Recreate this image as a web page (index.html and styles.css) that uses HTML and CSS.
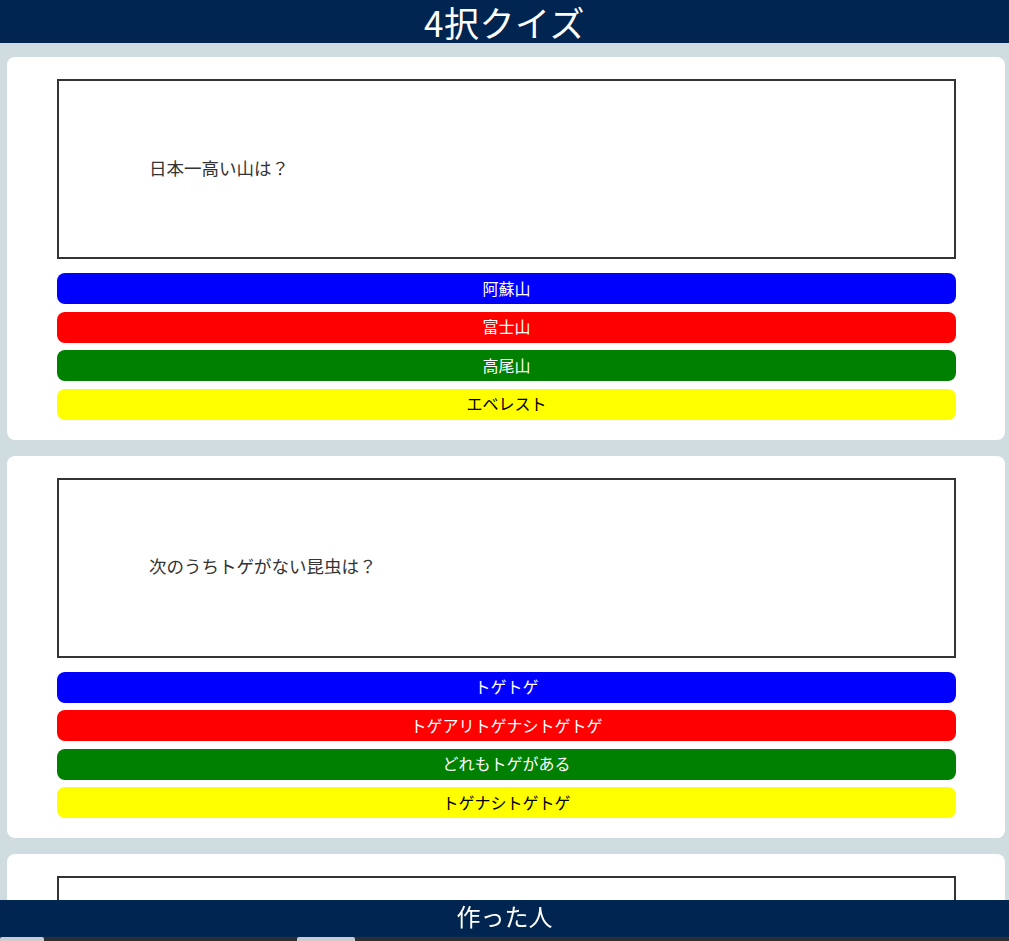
FILE: index.html
```html
<!DOCTYPE html>
<html lang="ja">
<head>
<meta charset="utf-8">
<title>4択クイズ</title>
<link rel="stylesheet" href="styles.css">
</head>
<body>
<header class="site-header"><h1 class="site-title">4択クイズ</h1></header>
<main class="quiz-list">
  <section class="quiz-card">
    <div class="question"><p class="question-text">日本一高い山は？</p></div>
    <div class="choices">
      <button class="choice choice-blue">阿蘇山</button>
      <button class="choice choice-red">富士山</button>
      <button class="choice choice-green">高尾山</button>
      <button class="choice choice-yellow">エベレスト</button>
    </div>
  </section>
  <section class="quiz-card">
    <div class="question"><p class="question-text">次のうちトゲがない昆虫は？</p></div>
    <div class="choices">
      <button class="choice choice-blue">トゲトゲ</button>
      <button class="choice choice-red">トゲアリトゲナシトゲトゲ</button>
      <button class="choice choice-green">どれもトゲがある</button>
      <button class="choice choice-yellow">トゲナシトゲトゲ</button>
    </div>
  </section>
  <section class="quiz-card">
    <div class="question"></div>
  </section>
</main>
<footer class="site-footer">作った人</footer>
<div class="bottom-strip"><span class="strip-thumb strip-thumb-a"></span><span class="strip-thumb strip-thumb-b"></span></div>
</body>
</html>
```

FILE: styles.css
```css
html, body {
  margin: 0;
  padding: 0;
}
body {
  background: #cfdde0;
  font-family: "Noto Sans CJK JP", "Noto Sans", sans-serif;
  color: #333;
  overflow: hidden;
}
.site-header {
  background: #002550;
  height: 43px;
  display: flex;
  align-items: center;
  justify-content: center;
}
.site-title {
  margin: 0;
  color: #fff;
  font-weight: 400;
  font-size: 35px;
  line-height: 40px;
  letter-spacing: 0.5px;
}
.quiz-list {
  display: flex;
  flex-direction: column;
  gap: 16px;
  padding: 14px 4px 80px 7px;
}
.quiz-card {
  background: #fff;
  border-radius: 8px;
  padding: 22px 49px 20px 50px;
  display: flex;
  flex-direction: column;
  gap: 14px;
}
.question {
  height: 176px;
  border: 2px solid #333;
  display: flex;
  align-items: center;
  padding-left: 90px;
}
.question-text {
  margin: 0 0 4px;
  font-size: 17.5px;
  color: #333;
}
.choices {
  display: flex;
  flex-direction: column;
  gap: 7.5px;
}
.choice {
  height: 31px;
  border: none;
  border-radius: 8px;
  font-family: inherit;
  font-size: 16px;
  color: #fff;
  padding: 0 0 2px;
  width: 100%;
}
.choice-blue { background: #0000ff; }
.choice-red { background: #ff0000; }
.choice-green { background: #008000; }
.choice-yellow { background: #ffff00; color: #000; }
.site-footer {
  position: fixed;
  left: 0;
  right: 0;
  bottom: 4px;
  height: 37px;
  background: #002550;
  color: #fff;
  font-size: 24px;
  line-height: 1;
  display: flex;
  align-items: center;
  justify-content: center;
  padding-bottom: 6px;
  box-sizing: border-box;
}
.bottom-strip {
  position: fixed;
  left: 0;
  right: 0;
  bottom: 0;
  height: 4px;
  background: #2b2f33;
  display: flex;
}
.strip-thumb {
  height: 4px;
  background: #c9cdd0;
  border-radius: 2px 2px 0 0;
}
.strip-thumb-a { width: 44px; }
.strip-thumb-b { width: 58px; margin-left: 253px; }
```
